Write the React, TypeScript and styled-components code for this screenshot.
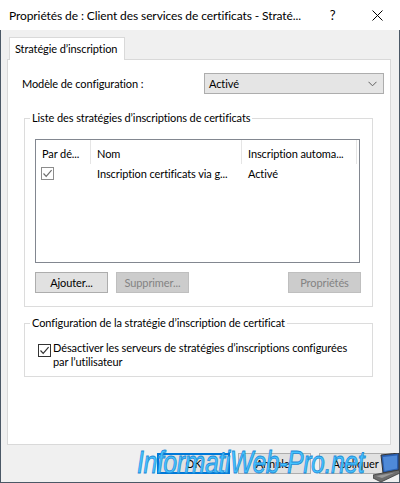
import React from "react";
import styled, { createGlobalStyle } from "styled-components";

const Global = createGlobalStyle`
  html, body { margin: 0; padding: 0; background: #ffffff; }
  body {
    font-family: Lato, "Noto Sans", sans-serif;
    font-size: 11px;
    letter-spacing: -0.1px;
    color: #000;
  }
  * { box-sizing: border-box; }
`;

const Window = styled.div`
  position: relative;
  width: 400px;
  height: 483px;
  display: flex;
  flex-direction: column;
  overflow: hidden;
`;

const TitleBar = styled.div`
  height: 30px;
  flex: none;
  background: #ffffff;
  display: flex;
  align-items: center;
  padding-left: 9px;
`;

const Title = styled.div`
  flex: 1;
  min-width: 0;
  overflow: hidden;
  white-space: nowrap;
  font-size: 12px;
  color: #000;
`;

const TitleButton = styled.div`
  width: 45px;
  height: 30px;
  flex: none;
  display: flex;
  align-items: center;
  justify-content: center;
  font-size: 13px;
`;

const Body = styled.div`
  flex: 1;
  display: flex;
  flex-direction: column;
  background: #f0f0f0;
  border: 1px solid #4b5866;
  border-top: none;
  padding: 7px 8px 8px 6px;
`;

const TabStrip = styled.div`
  display: flex;
  padding-left: 2px;
  position: relative;
  z-index: 1;
`;

const Tab = styled.div`
  width: 116px;
  height: 23px;
  margin-bottom: -1px;
  background: #ffffff;
  border: 1px solid #d9d9d9;
  border-bottom: none;
  padding: 4px 0 0 5px;
  white-space: nowrap;
`;

const Panel = styled.div`
  flex: 1;
  background: #ffffff;
  border: 1px solid #d9d9d9;
  display: flex;
  flex-direction: column;
`;

const ConfigRow = styled.div`
  display: flex;
  align-items: center;
  justify-content: space-between;
  margin: 13px 6px 0 14px;
`;

const Combo = styled.div`
  width: 180px;
  height: 21px;
  background: #e5e5e5;
  border: 1px solid #adadad;
  display: flex;
  align-items: center;
  justify-content: space-between;
  padding: 0 6px 0 4px;
`;

const Group = styled.fieldset<{ $mt: number }>`
  margin: ${(p) => p.$mt}px 17px 0 16px;
  padding: 0;
  border: 1px solid #dcdcdc;
  min-width: 0;
`;

const Legend = styled.legend`
  margin-left: 5px;
  padding: 0 2px;
  line-height: 16px;
  white-space: nowrap;
`;

const GroupContent = styled.div<{ $pad: string }>`
  padding: ${(p) => p.$pad};
`;

const ListView = styled.div`
  width: 325px;
  height: 124px;
  border: 1px solid #828790;
  background: #fff;
`;

const Columns = "55px 151px 115px";

const HeaderRow = styled.div`
  display: grid;
  grid-template-columns: ${Columns};
  height: 24px;
`;

const HeaderCell = styled.div`
  display: flex;
  align-items: center;
  padding: 2px 0 0 6px;
  border-right: 1px solid #e5e5e5;
  white-space: nowrap;
  overflow: hidden;
`;

const DataRow = styled.div`
  display: grid;
  grid-template-columns: ${Columns};
  height: 19px;
`;

const DataCell = styled.div<{ $pl: number }>`
  display: flex;
  align-items: center;
  padding-left: ${(p) => p.$pl}px;
  white-space: nowrap;
`;

const Box = styled.span<{ $dark?: boolean }>`
  width: 13px;
  height: 13px;
  flex: none;
  border: 1px solid ${(p) => (p.$dark ? "#333333" : "#8c8c8c")};
  background: #fff;
  display: flex;
  align-items: center;
  justify-content: center;
`;

const ButtonRow = styled.div`
  display: flex;
  gap: 8px;
  margin-top: 9px;
  margin-right: -1px;
`;

const Spacer = styled.div`
  flex: 1;
`;

const Button = styled.button<{ $variant?: "default" | "disabled" | "normal" }>`
  width: 73px;
  height: 21px;
  font-family: inherit;
  font-size: 11px;
  letter-spacing: -0.1px;
  padding: 0;
  color: ${(p) => (p.$variant === "disabled" ? "#838383" : "#000")};
  background: ${(p) => (p.$variant === "disabled" ? "#cccccc" : "#e1e1e1")};
  border: 1px solid
    ${(p) =>
      p.$variant === "disabled"
        ? "#bfbfbf"
        : p.$variant === "default"
        ? "#0078d7"
        : "#adadad"};
  box-shadow: ${(p) =>
    p.$variant === "default" ? "inset 0 0 0 1px #0078d7" : "none"};
`;

const CheckRow = styled.label`
  display: flex;
  align-items: flex-start;
  gap: 2px;
`;

const CheckText = styled.span`
  line-height: 14px;
  margin-top: -3px;
  white-space: nowrap;
`;

const Footer = styled.div`
  display: flex;
  justify-content: flex-end;
  gap: 8px;
  margin-top: 8px;
  margin-right: -1px;
`;

const Watermark = styled.div`
  position: absolute;
  left: 137px;
  top: 446px;
  font-family: "Liberation Sans", Arial, sans-serif;
  font-style: italic;
  font-size: 31px;
  letter-spacing: -0.5px;
  color: #45c4ff;
  -webkit-text-stroke: 0.8px #1d8ad8;
  transform-origin: left top;
  transform: scaleX(0.8);
  white-space: nowrap;
  line-height: 34px;
  pointer-events: none;
`;

const Laptop = styled.svg`
  position: absolute;
  left: 373px;
  top: 453px;
`;

const Check = ({ color }: { color: string }) => (
  <svg width="11" height="11" viewBox="0 0 11 11">
    <path d="M1.5 5.5 L4.2 8.3 L9.6 2.2" fill="none" stroke={color} strokeWidth="1.2" />
  </svg>
);

export default function App() {
  return (
    <>
      <Global />
      <Window>
        <TitleBar>
          <Title>Propriétés de : Client des services de certificats - Straté...</Title>
          <TitleButton>?</TitleButton>
          <TitleButton>
            <svg width="11" height="11" viewBox="0 0 11 11">
              <path d="M0.5 0.5 L10.5 10.5 M10.5 0.5 L0.5 10.5" stroke="#000" strokeWidth="1" />
            </svg>
          </TitleButton>
        </TitleBar>
        <Body>
          <TabStrip>
            <Tab>Stratégie d’inscription</Tab>
          </TabStrip>
          <Panel>
            <ConfigRow>
              <span>Modèle de configuration :</span>
              <Combo>
                <span>Activé</span>
                <svg width="9" height="6" viewBox="0 0 9 6">
                  <path d="M0.5 0.8 L4.5 4.8 L8.5 0.8" fill="none" stroke="#606060" strokeWidth="1" />
                </svg>
              </Combo>
            </ConfigRow>

            <Group $mt={16}>
              <Legend>Liste des stratégies d’inscriptions de certificats</Legend>
              <GroupContent $pad="13px 12px 13px 10px">
                <ListView>
                  <HeaderRow>
                    <HeaderCell>Par dé...</HeaderCell>
                    <HeaderCell>Nom</HeaderCell>
                    <HeaderCell>Inscription automa...</HeaderCell>
                  </HeaderRow>
                  <DataRow>
                    <DataCell $pl={5}>
                      <Box>
                        <Check color="#6e6e6e" />
                      </Box>
                    </DataCell>
                    <DataCell $pl={6}>Inscription certificats via g...</DataCell>
                    <DataCell $pl={6}>Activé</DataCell>
                  </DataRow>
                </ListView>
                <ButtonRow>
                  <Button $variant="normal">Ajouter...</Button>
                  <Button $variant="disabled">Supprimer...</Button>
                  <Spacer />
                  <Button $variant="disabled">Propriétés</Button>
                </ButtonRow>
              </GroupContent>
            </Group>

            <Group $mt={8}>
              <Legend>Configuration de la stratégie d’inscription de certificat</Legend>
              <GroupContent $pad="13px 12px 7px 13px">
                <CheckRow>
                  <Box $dark>
                    <Check color="#333333" />
                  </Box>
                  <CheckText>
                    Désactiver les serveurs de stratégies d’inscriptions configurées
                    <br />
                    par l’utilisateur
                  </CheckText>
                </CheckRow>
              </GroupContent>
            </Group>
          </Panel>
          <Footer>
            <Button $variant="default">OK</Button>
            <Button $variant="normal">Annuler</Button>
            <Button $variant="normal">Appliquer</Button>
          </Footer>
        </Body>
        <Watermark>InformatiWeb-Pro.net</Watermark>
        <Laptop width="27" height="30" viewBox="0 0 27 30">
          <path d="M8 2 L26 0 L26 17 L10 20 Z" fill="#2a5fb0" stroke="#333" strokeWidth="1" />
          <path d="M10 4 L24 2.5 L24 15.5 L11.5 18 Z" fill="#4f8ad8" />
          <path d="M0 22 L10 20 L26 17 L27 20 L8 29 L0 25 Z" fill="#6d6d6d" stroke="#3a3a3a" strokeWidth="0.8" />
          <path d="M3 23 L11 21.5 L22 19.5 L9 25 Z" fill="#9a9a9a" />
        </Laptop>
      </Window>
    </>
  );
}
